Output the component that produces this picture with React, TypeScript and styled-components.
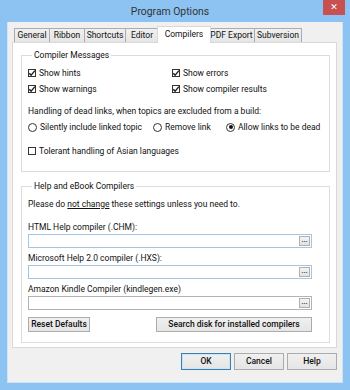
import React from 'react'
import styled, { createGlobalStyle } from 'styled-components'

const GlobalStyle = createGlobalStyle`
    html, body {
        margin: 0;
        padding: 0;
        background: #8dc3f2;
    }
    body {
        font-family: Roboto, 'Liberation Sans', sans-serif;
        font-size: 8.5px;
        color: #111;
    }
`

const tabs = [
    { label: 'General', width: 36 },
    { label: 'Ribbon', width: 36 },
    { label: 'Shortcuts', width: 42 },
    { label: 'Editor', width: 34 },
    { label: 'Compilers', width: 50, active: true },
    { label: 'PDF Export', width: 47 },
    { label: 'Subversion', width: 48 },
]

const compilers = [
    { label: 'HTML Help compiler (.CHM):', focus: true },
    { label: 'Microsoft Help 2.0 compiler (.HXS):', focus: true },
    { label: 'Amazon Kindle Compiler (kindlegen.exe)', focus: false },
]

export default function App() {
    return (
        <>
            <GlobalStyle />
            <Window>
                <TitleBar>
                    <span />
                    <Title>Program Options</Title>
                    <CloseButton>✕</CloseButton>
                </TitleBar>
                <Client>
                    <TabRow>
                        {tabs.map((tab) => (
                            <Tab key={tab.label} $active={!!tab.active} $w={tab.width}>
                                {tab.label}
                            </Tab>
                        ))}
                    </TabRow>
                    <Panel>
                        <Group>
                            <Legend>Compiler Messages</Legend>
                            <CheckGrid>
                                <Check label="Show hints" checked />
                                <Check label="Show errors" checked />
                                <Check label="Show warnings" checked />
                                <Check label="Show compiler results" checked />
                            </CheckGrid>
                            <Text $top={6}>
                                Handling of dead links, when topics are excluded from a build:
                            </Text>
                            <RadioRow>
                                <Radio label="Silently include linked topic" />
                                <Radio label="Remove link" />
                                <Radio label="Allow links to be dead" checked />
                            </RadioRow>
                            <Spacer $h={8} />
                            <Check label="Tolerant handling of Asian languages" />
                        </Group>
                        <Group $second>
                            <Legend>Help and eBook Compilers</Legend>
                            <Text>
                                Please do <Underline>not change</Underline> these settings
                                unless you need to.
                            </Text>
                            <Spacer $h={5} />
                            {compilers.map((c) => (
                                <React.Fragment key={c.label}>
                                    <FieldLabel>{c.label}</FieldLabel>
                                    <Input $focus={c.focus}>
                                        <BrowseButton>...</BrowseButton>
                                    </Input>
                                </React.Fragment>
                            ))}
                            <ButtonRow>
                                <PanelButton $w={62}>Reset Defaults</PanelButton>
                                <PanelButton $w={156}>
                                    Search disk for installed compilers
                                </PanelButton>
                            </ButtonRow>
                        </Group>
                    </Panel>
                    <DialogButtons>
                        <DialogButton $default>OK</DialogButton>
                        <DialogButton>Cancel</DialogButton>
                        <DialogButton>Help</DialogButton>
                    </DialogButtons>
                </Client>
            </Window>
        </>
    )
}

function Check({ label, checked }: { label: string; checked?: boolean }) {
    return (
        <Option>
            <Box>
                {checked && (
                    <svg width="8" height="8" viewBox="0 0 8 8">
                        <path
                            d="M1.2 4.2 L3.1 6.1 L6.9 1.6"
                            fill="none"
                            stroke="#222"
                            strokeWidth="1.4"
                        />
                    </svg>
                )}
            </Box>
            {label}
        </Option>
    )
}

function Radio({ label, checked }: { label: string; checked?: boolean }) {
    return (
        <Option>
            <Circle>{checked && <Dot />}</Circle>
            {label}
        </Option>
    )
}

const Window = styled.div`
    width: 350px;
    height: 390px;
    box-sizing: border-box;
    display: flex;
    flex-direction: column;
    background: #8dc3f2;
    padding: 0 7px 7px;
`

const TitleBar = styled.div`
    height: 22px;
    margin: 0 -2px 0 -7px;
    display: grid;
    grid-template-columns: 1fr auto 1fr;
    align-items: start;
`

const Title = styled.div`
    font-size: 10.4px;
    line-height: 24px;
    color: #333;
    padding-right: 5px;
`

const CloseButton = styled.div`
    justify-self: end;
    width: 22px;
    height: 15px;
    background: #c75050;
    color: #fff;
    font-family: 'DejaVu Sans', sans-serif;
    font-size: 9px;
    font-weight: bold;
    line-height: 15px;
    text-align: center;
`

const Client = styled.div`
    flex: 1;
    display: flex;
    flex-direction: column;
    background: #f0f0f0;
    box-shadow: inset 1px 0 #cfe3f6, inset -1px 0 #cfe3f6, inset 0 -1px #cfe3f6;
    padding: 4px 6px 0 5px;
`

const TabRow = styled.div`
    display: flex;
    align-items: flex-end;
    height: 16px;
    padding-left: 2px;
`

const Tab = styled.div<{ $active: boolean; $w: number }>`
    box-sizing: border-box;
    width: ${(p) => p.$w + (p.$active ? 4 : 0)}px;
    height: ${(p) => (p.$active ? 17 : 14)}px;
    margin: 0 ${(p) => (p.$active ? -2 : 0)}px ${(p) => (p.$active ? -1 : 0)}px;
    position: relative;
    z-index: ${(p) => (p.$active ? 2 : 1)};
    border: 1px solid ${(p) => (p.$active ? '#d9d9d9' : '#acacac')};
    border-bottom: none;
    margin-left: ${(p) => (p.$active ? -2 : -1)}px;
    background: ${(p) => (p.$active ? '#fff' : 'linear-gradient(#f0f0f0, #e5e5e5)')};
    text-align: center;
    line-height: ${(p) => (p.$active ? 15 : 13)}px;
    white-space: nowrap;
    &:first-child {
        margin-left: 0;
    }
`

const Panel = styled.div`
    height: 306px;
    box-sizing: border-box;
    border: 1px solid #d9d9d9;
    background: #fff;
    padding: 6px 6px 0 8px;
    display: flex;
    flex-direction: column;
`

const Group = styled.fieldset<{ $second?: boolean }>`
    margin: ${(p) => (p.$second ? '8px 0 0' : '0')};
    border: 1px solid #dcdcdc;
    padding: 4px ${(p) => (p.$second ? 17 : 6)}px ${(p) => (p.$second ? 10 : 12)}px 6px;
    min-width: 0;
    display: flex;
    flex-direction: column;
`

const Legend = styled.legend`
    padding: 0 2px;
    margin-left: 4px;
    line-height: 12px;
`

const CheckGrid = styled.div`
    display: grid;
    grid-template-columns: 144px 1fr;
    grid-auto-rows: 16px;
`

const Option = styled.label`
    display: flex;
    align-items: center;
    gap: 3px;
    height: 16px;
    white-space: nowrap;
`

const Box = styled.span`
    box-sizing: border-box;
    width: 8px;
    height: 8px;
    border: 1px solid #333;
    background: #fff;
    display: flex;
    align-items: center;
    justify-content: center;
    & svg {
        flex: none;
    }
`

const Circle = styled.span`
    box-sizing: border-box;
    width: 9px;
    height: 9px;
    border: 1px solid #333;
    border-radius: 50%;
    display: flex;
    align-items: center;
    justify-content: center;
`

const Dot = styled.span`
    width: 4px;
    height: 4px;
    border-radius: 50%;
    background: #111;
`

const Text = styled.div<{ $top?: number }>`
    line-height: 16px;
    margin-top: ${(p) => p.$top || 0}px;
    white-space: nowrap;
`

const Underline = styled.span`
    text-decoration: underline;
`

const RadioRow = styled.div`
    display: grid;
    grid-template-columns: 125px 73px auto;
`

const Spacer = styled.div<{ $h: number }>`
    height: ${(p) => p.$h}px;
`

const FieldLabel = styled.div`
    line-height: 14px;
    margin-top: 3px;
    white-space: nowrap;
`

const Input = styled.div<{ $focus: boolean }>`
    box-sizing: border-box;
    height: 14px;
    border: 1px solid ${(p) => (p.$focus ? '#a7c4e2' : '#b3b3b3')};
    background: #fff;
    display: flex;
    justify-content: flex-end;
    align-items: center;
    padding-right: 1px;
`

const BrowseButton = styled.div`
    box-sizing: border-box;
    width: 11px;
    height: 10px;
    border: 1px solid #b0b0b0;
    background: linear-gradient(#f4f4f4, #e2e2e2);
    font-size: 7px;
    line-height: 6px;
    text-align: center;
    font-weight: bold;
    color: #333;
`

const ButtonRow = styled.div`
    display: flex;
    justify-content: space-between;
    margin-top: 7px;
`

const PanelButton = styled.div<{ $w: number }>`
    box-sizing: border-box;
    width: ${(p) => p.$w}px;
    height: 15px;
    border: 1px solid #acacac;
    background: linear-gradient(#f0f0f0, #e5e5e5);
    font-weight: 500;
    line-height: 13px;
    text-align: center;
    white-space: nowrap;
`

const DialogButtons = styled.div`
    display: flex;
    justify-content: flex-end;
    gap: 3px;
    margin-top: 5px;
`

const DialogButton = styled.div<{ $default?: boolean }>`
    box-sizing: border-box;
    width: 50px;
    height: 17px;
    border: 1px solid ${(p) => (p.$default ? '#3c7fb1' : '#acacac')};
    background: linear-gradient(#f0f0f0, #e5e5e5);
    box-shadow: ${(p) => (p.$default ? 'inset 0 0 0 1px #cde4f7' : 'none')};
    font-weight: 500;
    line-height: 15px;
    text-align: center;
`
